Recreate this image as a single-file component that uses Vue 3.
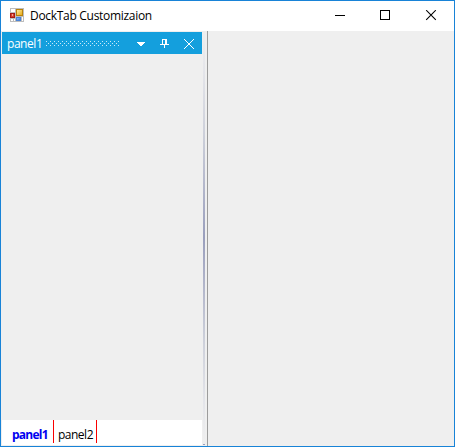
<script setup>
const tabs = [
  { name: 'panel1', active: true },
  { name: 'panel2', active: false },
]
</script>

<template>
  <div class="window">
    <header class="titlebar">
      <svg class="app-icon" width="14" height="14" viewBox="0 0 14 14" shape-rendering="crispEdges">
        <defs>
          <linearGradient id="gold" x1="0" y1="0" x2="1" y2="1"><stop offset="0" stop-color="#fff0a8" /><stop offset="1" stop-color="#e5a50c" /></linearGradient>
          <linearGradient id="sky" x1="0" y1="0" x2="1" y2="1"><stop offset="0" stop-color="#9cc8ff" /><stop offset="1" stop-color="#3470cf" /></linearGradient>
        </defs>
        <rect width="14" height="14" fill="#bdbdbd" />
        <rect x="1" y="1" width="4" height="3" fill="#fff" />
        <rect x="1" y="11" width="2" height="2" fill="#fff" />
        <rect x="4" y="11" width="1" height="2" fill="#fff" />
        <rect x="12" y="9" width="1" height="4" fill="#fff" />
        <rect x="0.5" y="5.5" width="4" height="4" fill="#d8402c" stroke="#a31b16" />
        <rect x="2" y="6" width="1" height="2" fill="#f4a093" />
        <rect x="6.5" y="1.5" width="6" height="6" fill="url(#gold)" stroke="#b98209" />
        <rect x="6.5" y="9.5" width="4" height="3" fill="url(#sky)" stroke="#4b83d6" />
      </svg>
      <span class="title">DockTab Customizaion</span>
      <svg class="controls" width="102" height="11" viewBox="0 0 102 11">
        <g shape-rendering="crispEdges" fill="none" stroke="#000">
          <path d="M0 5.5H10" />
          <rect x="45.5" y="0.5" width="9" height="9" />
        </g>
        <path d="M91.2 0.2L100.8 9.8M100.8 0.2L91.2 9.8" stroke="#000" stroke-width="1.1" fill="none" />
      </svg>
    </header>
    <main class="workspace">
      <section class="dock">
        <div class="caption">
          <span class="caption-text">panel1</span>
          <svg class="grip" width="74" height="5">
            <defs>
              <pattern id="dots" width="4" height="4" patternUnits="userSpaceOnUse">
                <rect width="1" height="1" fill="#c8eafa" />
                <rect x="2" y="2" width="1" height="1" fill="#c8eafa" />
              </pattern>
            </defs>
            <rect width="74" height="5" fill="url(#dots)" />
          </svg>
          <svg class="caption-icons" width="58" height="11" viewBox="0 0 58 11">
            <path d="M0 3H8V4H7V5H6V6H5V7H3V6H2V5H1V4H0Z" fill="#fff" shape-rendering="crispEdges" />
            <path d="M25 0H30V5H32V6H28V9H27V6H23V5H25ZM26 1V5H28V1Z" fill="#fff" fill-rule="evenodd" shape-rendering="crispEdges" />
            <path d="M47 0L57 10M57 0L47 10" stroke="#fff" fill="none" />
          </svg>
        </div>
        <div class="content"></div>
        <nav class="tabs">
          <div v-for="t in tabs" :key="t.name" class="tab" :class="{ active: t.active }"><span>{{ t.name }}</span></div>
        </nav>
      </section>
      <div class="splitter"></div>
      <section class="client"></section>
    </main>
  </div>
</template>

<style>
body { margin: 0; overflow: hidden; }
</style>

<style scoped>
.window {
  box-sizing: border-box;
  width: 455px;
  height: 447px;
  border: 1px solid #1883d7;
  background: #efefef;
  display: flex;
  flex-direction: column;
  font: 12px/16px "Open Sans", "Noto Sans", sans-serif;
  color: #000;
}
.titlebar {
  height: 30px;
  flex: none;
  background: #fff;
  display: flex;
  align-items: flex-start;
}
.app-icon { margin: 7px 0 0 9px; flex: none; }
.title { margin: 7px 0 0 6px; letter-spacing: -0.3px; white-space: nowrap; }
.controls { margin: 9px 17px 0 auto; flex: none; }
.workspace { flex: 1; display: flex; min-height: 0; }
.dock {
  width: 200px;
  margin: 1px;
  display: flex;
  flex-direction: column;
}
.caption {
  height: 22px;
  flex: none;
  background: #149fdd;
  color: #fff;
  display: flex;
  align-items: flex-start;
}
.caption-text { width: 39px; margin: 4px 0 0 5px; letter-spacing: -0.45px; }
.grip { margin-top: 9px; flex: none; }
.caption-icons { margin: 7px 0 0 17px; flex: none; }
.content { flex: 1; }
.tabs {
  height: 25px;
  background: #fff;
  display: flex;
  padding-left: 6px;
}
.tab {
  box-sizing: border-box;
  width: 43px;
  height: 23px;
  border-right: 1px solid #fa0000;
  padding: 7px 0 0 4px;
  letter-spacing: -0.5px;
}
.tab.active {
  width: 46px;
  font-weight: 700;
  letter-spacing: -0.75px;
}
.tab.active span { color: #0000f0; }
.splitter {
  width: 2px;
  margin-bottom: 1px;
  border-bottom: 1px solid #9a9fbd;
  background: linear-gradient(#efefef, #e4e5ea 10%, #cdd0da 25%, #9a9fbd 50%, #cdd0da 75%, #e4e5ea 90%, #efefef);
}
.client {
  flex: 1;
  margin-left: 2px;
  border-left: 1px solid #9c9c9c;
}
</style>
